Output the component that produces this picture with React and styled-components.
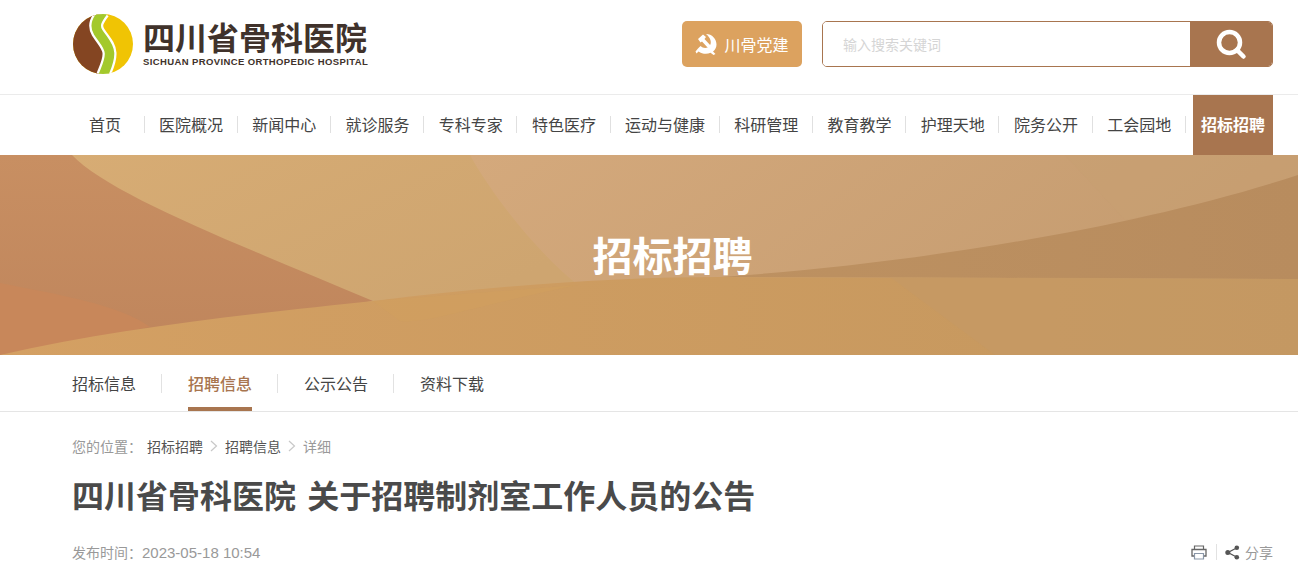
import styled, { createGlobalStyle } from "styled-components"

const navItems = ["医院概况", "新闻中心", "就诊服务", "专科专家", "特色医疗", "运动与健康", "科研管理", "教育教学", "护理天地", "院务公开", "工会园地"]
const tabs = ["招标信息", "招聘信息", "公示公告", "资料下载"]

export default function App() {
    return (
        <Page>
            <GlobalStyle />
            <Header>
                <Brand>
                    <LogoMark />
                    <BrandText>
                        <BrandName>四川省骨科医院</BrandName>
                        <BrandSub>SICHUAN PROVINCE ORTHOPEDIC HOSPITAL</BrandSub>
                    </BrandText>
                </Brand>
                <HeaderRight>
                    <PartyButton>
                        <PartyIcon />
                        川骨党建
                    </PartyButton>
                    <SearchBox>
                        <SearchInput placeholder="输入搜索关键词" />
                        <SearchButton>
                            <SearchIcon />
                        </SearchButton>
                    </SearchBox>
                </HeaderRight>
            </Header>
            <NavBar>
                <NavInner>
                    <HomeLink>首页</HomeLink>
                    {navItems.map(item => (
                        <NavLink key={item}>{item}</NavLink>
                    ))}
                    <NavActive>招标招聘</NavActive>
                </NavInner>
            </NavBar>
            <Banner>
                <BannerArt />
                <BannerTitle>招标招聘</BannerTitle>
            </Banner>
            <TabBar>
                {tabs.map((tab, id) => (
                    <Tab key={tab} $active={id === 1} $last={id === tabs.length - 1}>{tab}</Tab>
                ))}
            </TabBar>
            <Article>
                <Crumbs>
                    <CrumbLabel>您的位置：</CrumbLabel>
                    <CrumbLink>招标招聘</CrumbLink>
                    <Chevron />
                    <CrumbLink>招聘信息</CrumbLink>
                    <Chevron />
                    <CrumbLabel>详细</CrumbLabel>
                </Crumbs>
                <Title>四川省骨科医院 关于招聘制剂室工作人员的公告</Title>
                <Meta>
                    <span>发布时间：<DateText>2023-05-18 10:54</DateText></span>
                    <Tools>
                        <PrintIcon />
                        <ToolDivider />
                        <ShareIcon />
                        <ShareText>分享</ShareText>
                    </Tools>
                </Meta>
            </Article>
        </Page>
    )
}

function LogoMark() {
    const band = "M30 -2C24 6 21 11 25 18C30 26 36 31 36.500 39C37 47 33 54 30 62"
    return (
        <svg width="60" height="60" viewBox="0 0 60 60">
            <defs>
                <clipPath id="logo-circle">
                    <circle cx="30" cy="30" r="30" />
                </clipPath>
            </defs>
            <g clipPath="url(#logo-circle)">
                <rect width="60" height="60" fill="#F0C404" />
                <path d={`${band}H-2V-2Z`} fill="#844522" />
                <path d={band} fill="none" stroke="#FFFFFF" strokeWidth="14" />
                <path d={band} fill="none" stroke="#A3C92C" strokeWidth="9.500" />
            </g>
        </svg>
    )
}

function PartyIcon() {
    return (
        <svg width="22" height="22" viewBox="0 0 22 22">
            <path d="M11 1C17 1 21.500 6 21.500 11.500C21.500 14.500 20 17 18 18.500L20.500 21L18.500 22L15.500 19.800C12 21.500 7 21 3.500 18.500L1.500 20.500L.5 18.500L3 15.500L5.500 13C8 15.500 12.500 15.500 14.500 13C17 10 16 5 11 1Z" fill="#fff" />
            <path d="M3 6L8 1.500L11 4L9.500 6L16 13L13.500 15.500L7 8.500L5.500 9.500Z" fill="#fff" />
        </svg>
    )
}

function SearchIcon() {
    return (
        <svg width="32" height="32" viewBox="0 0 32 32">
            <circle cx="14.500" cy="14.500" r="10.500" fill="none" stroke="#fff" strokeWidth="4.500" />
            <path d="M22 22L28.500 28.500" stroke="#fff" strokeWidth="4.500" strokeLinecap="round" />
        </svg>
    )
}

function Chevron() {
    return (
        <ChevronSvg width="8" height="12" viewBox="0 0 8 12">
            <path d="M1 1L6.500 6L1 11" fill="none" stroke="#c8c8c8" strokeWidth="1.200" />
        </ChevronSvg>
    )
}

function PrintIcon() {
    return (
        <svg width="16" height="15" viewBox="0 0 16 15">
            <path d="M3.500 4.500V1H12.500V4.500" fill="none" stroke="#666" strokeWidth="1.200" />
            <path d="M3.500 11H1V4.500H15V11H12.500" fill="none" stroke="#666" strokeWidth="1.300" />
            <path d="M3.500 8.500H12.500V14H3.500Z" fill="none" stroke="#8a97a8" strokeWidth="1.200" />
        </svg>
    )
}

function ShareIcon() {
    return (
        <svg width="15" height="15" viewBox="0 0 15 15">
            <path d="M11.500 3L3 7.500L11.500 12" fill="none" stroke="#555" strokeWidth="1.300" />
            <circle cx="11.800" cy="2.800" r="2.300" fill="#555" />
            <circle cx="2.800" cy="7.500" r="2.500" fill="#555" />
            <circle cx="11.800" cy="12.200" r="2.300" fill="#555" />
        </svg>
    )
}

function BannerArt() {
    return (
        <BannerSvg viewBox="0 0 1298 200" preserveAspectRatio="none">
            <defs>
                <linearGradient id="top-light" x1="0" y1="0" x2="1" y2="0.6">
                    <stop offset="0" stopColor="#D7AC74" />
                    <stop offset="1" stopColor="#CEA570" />
                </linearGradient>
                <linearGradient id="top-right" x1="0" y1="0" x2="1" y2="0.2">
                    <stop offset="0.35" stopColor="#D4A97C" />
                    <stop offset="1" stopColor="#C59C70" />
                </linearGradient>
                <linearGradient id="left-brown" x1="0" y1="0" x2="0" y2="1">
                    <stop offset="0" stopColor="#C88F62" />
                    <stop offset="1" stopColor="#BF855C" />
                </linearGradient>
                <linearGradient id="sand" x1="0" y1="0" x2="1" y2="0">
                    <stop offset="0" stopColor="#D4A063" />
                    <stop offset="1" stopColor="#C4975E" />
                </linearGradient>
                <linearGradient id="wedge" x1="0" y1="0" x2="1" y2="0">
                    <stop offset="0" stopColor="#BD9161" />
                    <stop offset="1" stopColor="#B88C5E" />
                </linearGradient>
            </defs>
            <rect width="1298" height="200" fill="url(#top-right)" />
            <path d="M1065 0H1298V20C1240 40 1180 55 1125 65Z" fill="#C79F72" opacity="0.5" />
            <path d="M60 0H470C495 45 540 100 578 130L373 155L60 100Z" fill="url(#top-light)" />
            <path d="M0 0H72C110 40 240 90 373 146L200 175L0 200Z" fill="url(#left-brown)" />
            <path d="M0 128C60 140 120 150 150 172L0 200Z" fill="#C8875A" />
            <path d="M720 122C900 110 1130 75 1298 20V124Z" fill="url(#wedge)" />
            <path d="M0 200C120 172 260 158 373 146C500 130 620 122 720 122L1298 124V200Z" fill="url(#sand)" />
            <path d="M890 122L1298 124V200H995Z" fill="#C49A66" opacity="0.6" />
            <path d="M373 146L400 166C430 168 470 152 578 130Z" fill="#D2A05E" opacity="0.5" />
        </BannerSvg>
    )
}

const GlobalStyle = createGlobalStyle`
    html, body{
        margin: 0;
        padding: 0;
        background: #FFFFFF;
        overflow: hidden;
    }
    *{
        box-sizing: border-box;
    }
`
const Page = styled.div`
    width: 1298px;
    height: 574px;
    overflow: hidden;
    font-family: "Noto Sans CJK SC", "Liberation Sans", sans-serif;
    color: #444444;
`
const Header = styled.header`
    height: 95px;
    padding: 0 25px 0 73px;
    display: flex;
    align-items: center;
    justify-content: space-between;
    border-bottom: 1px solid #EBEBEB;
`
const Brand = styled.div`
    display: flex;
    align-items: center;
    gap: 10px;
    margin-top: -6px;
`
const BrandText = styled.div`
    display: flex;
    flex-direction: column;
`
const BrandName = styled.div`
    font-size: 32px;
    line-height: 30px;
    font-weight: 700;
    color: #40322B;
    white-space: nowrap;
`
const BrandSub = styled.div`
    margin-top: 5px;
    font-family: "Liberation Sans", sans-serif;
    font-size: 9.500px;
    line-height: 11px;
    font-weight: 700;
    color: #40322B;
    letter-spacing: 0.38px;
    white-space: nowrap;
`
const HeaderRight = styled.div`
    display: flex;
    align-items: center;
    gap: 20px;
    margin-top: -7px;
`
const PartyButton = styled.div`
    width: 120px;
    height: 46px;
    background: #DCA25F;
    border-radius: 5px;
    color: #FFFFFF;
    font-size: 16px;
    display: flex;
    align-items: center;
    justify-content: center;
    gap: 7px;
`
const SearchBox = styled.div`
    width: 451px;
    height: 46px;
    border: 1px solid #A8754F;
    border-radius: 5px;
    display: flex;
    overflow: hidden;
`
const SearchInput = styled.input`
    flex: 1;
    min-width: 0;
    border: none;
    outline: none;
    padding: 0 20px;
    font-family: inherit;
    font-size: 14px;
    &::placeholder{
        color: #D5D5D5;
    }
`
const SearchButton = styled.div`
    width: 82px;
    background: #A8754F;
    display: flex;
    align-items: center;
    justify-content: center;
`
const NavBar = styled.nav`
    height: 60px;
    padding: 0 25px 0 72px;
`
const NavInner = styled.div`
    height: 100%;
    display: flex;
    align-items: stretch;
`
const HomeLink = styled.div`
    width: 72.500px;
    padding-left: 17px;
    padding-bottom: 2px;
    font-size: 16px;
    color: #444444;
    display: flex;
    align-items: center;
    position: relative;
    &::after{
        content: "";
        position: absolute;
        right: 0;
        top: 21px;
        height: 17px;
        width: 1px;
        background: #E0E0E0;
    }
`
const NavLink = styled.div`
    padding: 0 14.600px 2px;
    font-size: 16px;
    color: #444444;
    display: flex;
    align-items: center;
    white-space: nowrap;
    position: relative;
    &::after{
        content: "";
        position: absolute;
        right: 0;
        top: 21px;
        height: 17px;
        width: 1px;
        background: #E0E0E0;
    }
`
const NavActive = styled.div`
    width: 80px;
    margin-left: auto;
    padding-bottom: 2px;
    background: #A8754F;
    color: #FFFFFF;
    font-size: 16px;
    font-weight: 700;
    display: flex;
    align-items: center;
    justify-content: center;
`
const Banner = styled.div`
    height: 200px;
    position: relative;
    padding-left: 72px;
    padding-right: 25px;
    display: flex;
    align-items: center;
    justify-content: center;
    overflow: hidden;
`
const BannerSvg = styled.svg`
    position: absolute;
    inset: 0;
    width: 100%;
    height: 100%;
`
const BannerTitle = styled.h1`
    position: relative;
    margin: 0 0 3px;
    font-size: 40px;
    line-height: 56px;
    font-weight: 700;
    color: #FFFFFF;
`
const TabBar = styled.div`
    height: 57px;
    padding-left: 72px;
    display: flex;
    border-bottom: 1px solid #E5E5E5;
`
const Tab = styled.div`
    font-size: 16px;
    height: 56px;
    line-height: 57px;
    margin-right: ${props => props.$last ? "0" : "52px"};
    color: ${props => props.$active ? "#A8754F" : "#444444"};
    font-weight: ${props => props.$active ? 500 : 400};
    border-bottom: 4px solid ${props => props.$active ? "#A8754F" : "transparent"};
    position: relative;
    &::after{
        content: "";
        display: ${props => props.$last ? "none" : "block"};
        position: absolute;
        right: -26px;
        top: 19px;
        height: 19px;
        width: 1px;
        background: #E2E2E2;
    }
`
const Article = styled.div`
    padding: 24px 25px 0 72px;
`
const Crumbs = styled.div`
    display: flex;
    align-items: center;
    height: 20px;
    font-size: 14px;
`
const CrumbLabel = styled.span`
    color: #999999;
    margin-right: 5px;
`
const CrumbLink = styled.span`
    color: #555555;
`
const ChevronSvg = styled.svg`
    margin: 0 7px;
`
const Title = styled.h2`
    margin: 15px 0 0;
    font-size: 32px;
    line-height: 46px;
    font-weight: 700;
    color: #4A4A4A;
    word-spacing: 4px;
`
const Meta = styled.div`
    margin-top: 25px;
    height: 20px;
    display: flex;
    align-items: center;
    justify-content: space-between;
    font-size: 14px;
    color: #999999;
`
const DateText = styled.span`
    font-family: "Liberation Sans", sans-serif;
    font-size: 15px;
`
const Tools = styled.div`
    display: flex;
    align-items: center;
`
const ToolDivider = styled.div`
    width: 1px;
    height: 16px;
    background: #E2E2E2;
    margin: 0 8px 0 9px;
`
const ShareText = styled.span`
    margin-left: 5px;
`
